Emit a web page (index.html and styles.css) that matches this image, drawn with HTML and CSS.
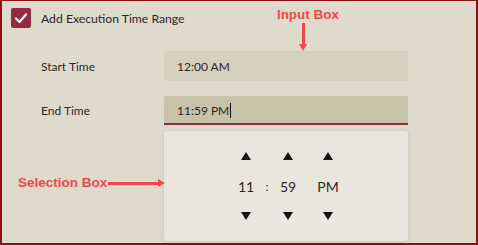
FILE: index.html
```html
<!DOCTYPE html>
<html>
<head>
  <meta charset="utf-8">
  <title>Execution Time Range</title>
  <link rel="stylesheet" href="styles.css">
</head>
<body>
  <div class="frame">
    <div class="check-row">
      <span class="checkbox">
        <svg width="14" height="14" viewBox="0 0 14 14"><path d="M2 7.5 L5.5 11 L12 3.5" fill="none" stroke="#fff" stroke-width="2.2" stroke-linecap="round" stroke-linejoin="round"/></svg>
      </span>
      <span class="check-label">Add Execution Time Range</span>
    </div>
    <div class="field">
      <div class="field-label">Start Time</div>
      <div class="input">12:00 AM</div>
    </div>
    <div class="field">
      <div class="field-label">End Time</div>
      <div class="input focused">11:59 PM<span class="caret"></span></div>
    </div>
    <div class="picker">
      <div class="picker-grid">
        <span class="up"></span><span></span><span class="up"></span><span class="up"></span>
        <span class="val">11</span><span class="val colon">:</span><span class="val">59</span><span class="val">PM</span>
        <span class="down"></span><span></span><span class="down"></span><span class="down"></span>
      </div>
    </div>

    <div class="note note-input">
      <span class="note-text">Input Box</span>
      <span class="line-v"></span>
      <span class="head-down"></span>
    </div>
    <div class="note note-select">
      <span class="note-text">Selection Box</span>
      <span class="line-h"></span>
      <span class="head-right"></span>
    </div>
  </div>
</body>
</html>
```

FILE: styles.css
```css
* {
  margin: 0;
  padding: 0;
  box-sizing: border-box;
}
body {
  font-family: "Lato", "Noto Sans", sans-serif;
  width: 478px;
  height: 245px;
  background: #dfdbcc;
  color: #2a2626;
  overflow: hidden;
}
.frame {
  position: relative;
  width: 478px;
  height: 245px;
  border: 2px solid #8b1111;
  border-top-width: 1px;
  padding: 7px 0 0 9px;
}
.check-row {
  display: flex;
  align-items: center;
  height: 20px;
}
.checkbox {
  width: 20px;
  height: 20px;
  border-radius: 2px;
  background: #962a40;
  display: flex;
  align-items: center;
  justify-content: center;
}
.check-label {
  margin-left: 10px;
  font-size: 12.2px;
}
.field {
  display: flex;
  align-items: center;
  margin-top: 15px;
}
.check-row + .field {
  margin-top: 23px;
}
.field-label {
  width: 153px;
  padding-left: 30px;
  font-size: 12px;
}
.input {
  width: 244px;
  height: 30px;
  padding-left: 13px;
  display: flex;
  align-items: center;
  font-size: 12px;
  background: #d5d1bf;
  border-radius: 2px;
}
.input.focused {
  height: 29px;
  background: #c8c2aa;
  border-bottom: 2px solid #962a40;
  border-radius: 2px 2px 0 0;
  padding-top: 1px;
}
.caret {
  display: inline-block;
  width: 1px;
  height: 15px;
  background: #111;
  margin-left: 1px;
}
.picker {
  margin: 6px 0 0 153px;
  width: 244px;
  height: 110px;
  background: #e9e6de;
  border-radius: 3px;
  box-shadow: 0 1px 4px rgba(0, 0, 0, 0.12);
  display: flex;
  align-items: center;
  justify-content: center;
}
.picker-grid {
  display: grid;
  grid-template-columns: 30px 12px 30px 50px;
  grid-template-rows: 22px 38px 22px;
  margin-left: 12px;
  align-items: center;
  justify-items: center;
}
.up, .down {
  width: 0;
  height: 0;
  border-left: 5px solid transparent;
  border-right: 5px solid transparent;
}
.up {
  border-bottom: 8px solid #1c0e12;
}
.down {
  border-top: 8px solid #1c0e12;
}
.val {
  font-size: 14px;
  color: #2a2626;
}
.colon {
  font-size: 12px;
}
.note {
  position: absolute;
  color: #f04848;
  font-family: "Liberation Sans", Arial, sans-serif;
  font-weight: bold;
  font-size: 13.5px;
  white-space: nowrap;
}
.note-input {
  left: 271px;
  top: 6px;
  display: flex;
  flex-direction: column;
  align-items: center;
  width: 70px;
}
.note-text {
  line-height: 16px;
}
.line-v {
  width: 3px;
  height: 21px;
  background: #f04848;
  margin-right: 10px;
}
.head-down {
  width: 0;
  height: 0;
  border-left: 4px solid transparent;
  border-right: 4px solid transparent;
  border-top: 7px solid #f04848;
  margin-right: 10px;
}
.note-select {
  left: 16px;
  top: 174px;
  display: flex;
  align-items: center;
}
.line-h {
  width: 50px;
  height: 3px;
  background: #f04848;
  margin-left: 1px;
}
.head-right {
  width: 0;
  height: 0;
  border-top: 4px solid transparent;
  border-bottom: 4px solid transparent;
  border-left: 7px solid #f04848;
}
```
